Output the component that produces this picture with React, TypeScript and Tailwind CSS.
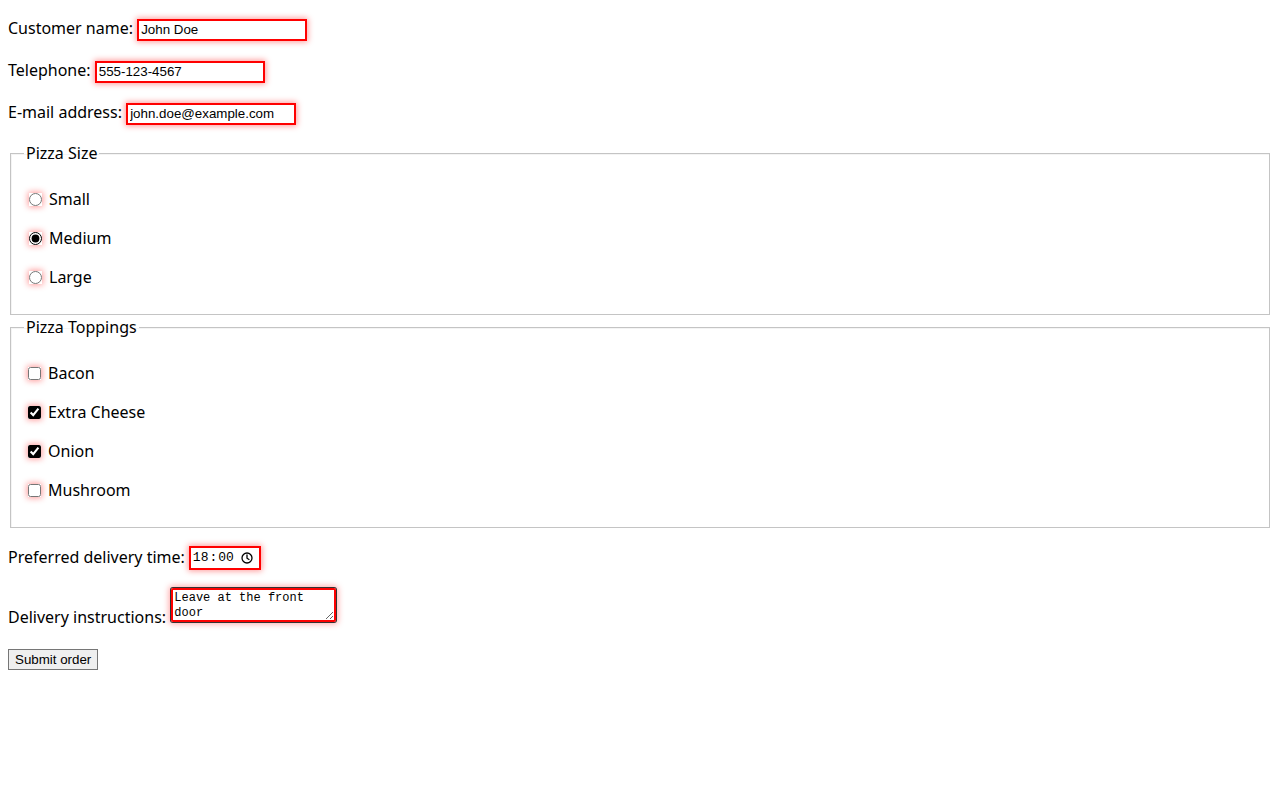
import React from "react";

const glow = "shadow-[0_0_6px_1px_rgba(255,0,0,0.4)]";
const textInput =
  "inline-block align-baseline border-2 border-solid border-[#ff0000] bg-white px-[2px] py-[1px] h-[22px] text-[13.33px] leading-[normal] text-black [font-family:'Liberation_Sans',Arial,sans-serif] w-[170px] " +
  glow;
const radioCls =
  "appearance-auto accent-black w-[13px] h-[13px] ml-[5px] mr-[7px] shrink-0 " + glow;
const checkCls =
  "appearance-auto accent-black w-[13px] h-[13px] ml-[4px] mr-[7px] shrink-0 " + glow;
const fieldsetCls =
  "mx-[2px] border border-solid border-[#c4c4c4] shadow-[inset_1px_1px_0_#f4f4f4] px-[13px] pt-[6.6px] pb-[9.5px]";

function Clock() {
  return (
    <svg width="12" height="12" viewBox="0 0 12 12" fill="none" stroke="black" strokeWidth="1.3">
      <circle cx="6" cy="6" r="5" />
      <path d="M6 3v3.2l2 1.3" strokeLinecap="round" />
    </svg>
  );
}

export default function App() {
  return (
    <div className="px-2 pb-2 text-[16px] text-black bg-white min-h-[800px] [font-family:'Noto_Sans',sans-serif]">
      <form className="-mt-px">
        <p className="my-4 leading-[26px]">
          <label>
            Customer name:{" "}
            <input type="text" defaultValue="John Doe" className={textInput} />
          </label>
        </p>
        <p className="my-4 leading-[26px]">
          <label>
            Telephone:{" "}
            <input type="tel" defaultValue="555-123-4567" className={textInput} />
          </label>
        </p>
        <p className="my-4 leading-[26px]">
          <label>
            E-mail address:{" "}
            <input type="email" defaultValue="john.doe@example.com" className={textInput} />
          </label>
        </p>
        <fieldset className={fieldsetCls}>
          <legend className="px-[2px]">Pizza Size</legend>
          <p className="my-4">
            <label className="flex items-center h-[23px]">
              <input type="radio" name="size" className={radioCls} />
              <span>Small</span>
            </label>
          </p>
          <p className="my-4">
            <label className="flex items-center h-[23px]">
              <input type="radio" name="size" defaultChecked className={radioCls} />
              <span>Medium</span>
            </label>
          </p>
          <p className="my-4">
            <label className="flex items-center h-[23px]">
              <input type="radio" name="size" className={radioCls} />
              <span>Large</span>
            </label>
          </p>
        </fieldset>
        <fieldset className={fieldsetCls}>
          <legend className="px-[2px]">Pizza Toppings</legend>
          <p className="my-4">
            <label className="flex items-center h-[23px]">
              <input type="checkbox" className={checkCls} />
              <span>Bacon</span>
            </label>
          </p>
          <p className="my-4">
            <label className="flex items-center h-[23px]">
              <input type="checkbox" defaultChecked className={checkCls} />
              <span>Extra Cheese</span>
            </label>
          </p>
          <p className="my-4">
            <label className="flex items-center h-[23px]">
              <input type="checkbox" defaultChecked className={checkCls} />
              <span>Onion</span>
            </label>
          </p>
          <p className="my-4">
            <label className="flex items-center h-[23px]">
              <input type="checkbox" className={checkCls} />
              <span>Mushroom</span>
            </label>
          </p>
        </fieldset>
        <p className="my-4">
          <label className="flex items-center h-[26px]">
            <span className="mr-[4px]">Preferred delivery time:</span>
            <span
              className={
                "mt-[2px] inline-flex items-center w-[72px] h-[24px] border-2 border-solid border-[#ff0000] bg-white pl-[2px] pr-[6px] text-[13px] text-black [font-family:'Liberation_Mono',monospace] " +
                glow
              }
            >
              <span>18</span>
              <span className="mx-[1px]">:</span>
              <span>00</span>
              <span className="ml-auto flex">
                <Clock />
              </span>
            </span>
          </label>
        </p>
        <p className="my-4">
          <label>
            Delivery instructions:{" "}
            <textarea
              defaultValue="Leave at the front door"
              className="inline-block align-baseline mt-[2px] mb-[1px] ml-px border-2 border-solid border-[#ff0000] rounded-[2px] bg-white pl-[1px] pr-[2px] py-[1px] text-[12px] leading-[15px] text-black [font-family:'Liberation_Mono',monospace] w-[165px] h-[34px] shadow-[0_0_0_1px_#333,0_0_6px_2px_rgba(255,0,0,0.35)]"
            />
          </label>
        </p>
        <p className="my-4 leading-[26px]">
          <button
            type="submit"
            className="inline-block align-baseline border border-solid border-[#767676] bg-[#efefef] px-[6px] py-[2px] text-[13.33px] leading-[normal] text-black [font-family:'Liberation_Sans',Arial,sans-serif]"
          >
            Submit order
          </button>
        </p>
      </form>
    </div>
  );
}
